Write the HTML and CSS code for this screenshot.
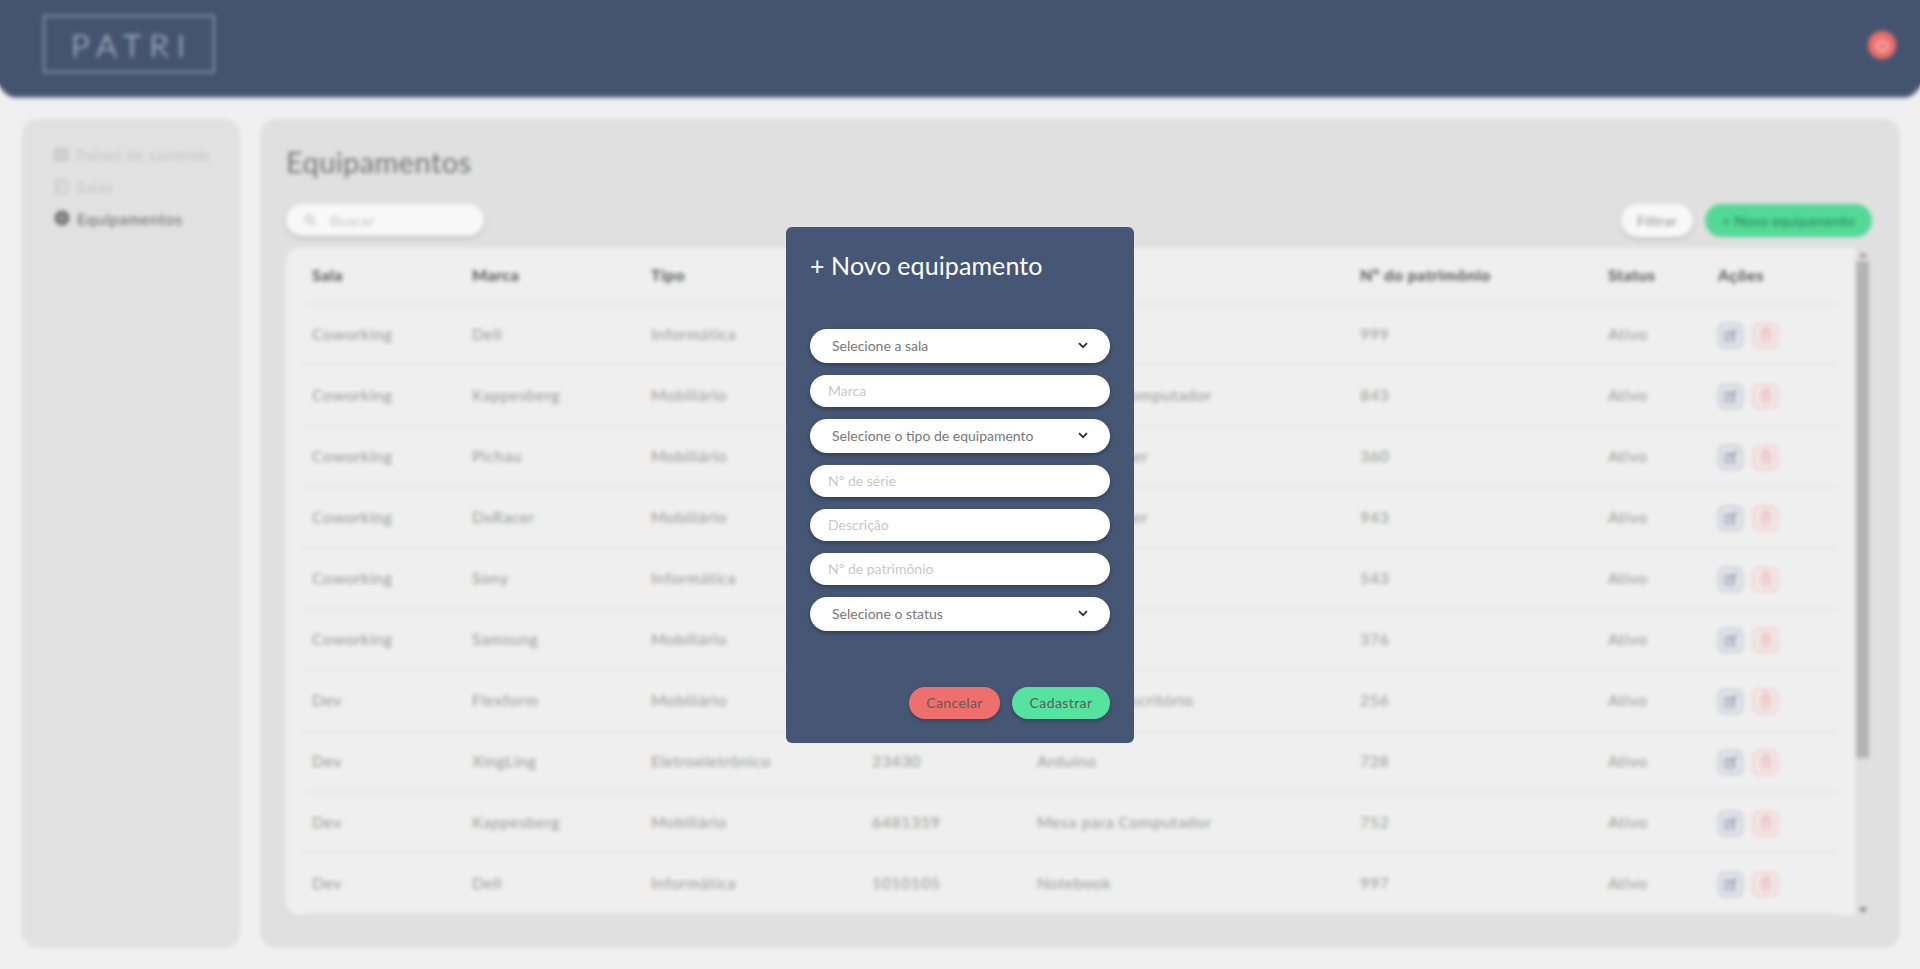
FILE: index.html
```html
<!DOCTYPE html>
<html lang="pt-BR">
<head>
  <meta charset="UTF-8">
  <meta name="viewport" content="width=device-width, initial-scale=1.0">
  <title>Patri</title>

  <link rel="stylesheet" href="styles.css">
</head>
<body>
  <header class="topbar">
    <div class="logo">PATRI</div>
    <button class="power">
      <svg width="16" height="16" viewBox="0 0 24 24" fill="none" stroke="#f8d3d2" stroke-width="2.6" stroke-linecap="round"><path d="M12 3v8"/><path d="M6.5 7a8 8 0 1 0 11 0"/></svg>
    </button>
  </header>

  <div class="page">
    <nav class="sidebar">
      <a class="nav-item">
        <svg width="15" height="15" viewBox="0 0 15 15" fill="#c4c4c4"><rect x="0" y="1" width="6.5" height="3.5"/><rect x="8" y="1" width="6.5" height="3.5"/><rect x="0" y="5.8" width="6.5" height="3.5"/><rect x="8" y="5.8" width="6.5" height="3.5"/><rect x="0" y="10.6" width="6.5" height="3.5"/><rect x="8" y="10.6" width="6.5" height="3.5"/></svg>
        Painel de controle
      </a>
      <a class="nav-item">
        <svg width="15" height="15" viewBox="0 0 15 15" fill="none" stroke="#c4c4c4" stroke-width="1.6"><rect x="2" y="1" width="11" height="13" rx="2"/><path d="M6 4v7"/></svg>
        Salas
      </a>
      <a class="nav-item active">
        <svg width="16" height="16" viewBox="0 0 16 16"><circle cx="8" cy="8" r="7.5" fill="#666"/><path d="M1 8h14M8 1v14M3 3l10 10M13 3L3 13" stroke="#ccc" stroke-width=".8"/></svg>
        Equipamentos
      </a>
    </nav>

    <main class="content">
      <h1>Equipamentos</h1>
      <div class="toolbar">
        <label class="search">
          <svg width="12" height="12" viewBox="0 0 12 12" fill="none" stroke="#bbb" stroke-width="1.6"><circle cx="5" cy="5" r="3.5"/><path d="M8 8l3 3"/></svg>
          <span>Buscar</span>
        </label>
        <button class="btn-filter">Filtrar</button>
        <button class="btn-new">+ Novo equipamento</button>
      </div>

      <div class="table-wrap">
        <div class="table-card">
          <table>
            <colgroup>
              <col class="c-sala"><col class="c-marca"><col class="c-tipo"><col class="c-serie"><col class="c-desc"><col class="c-pat"><col class="c-status"><col class="c-acoes">
            </colgroup>
            <thead>
              <tr><th>Sala</th><th>Marca</th><th>Tipo</th><th>Nº de série</th><th>Descrição</th><th>Nº do patrimônio</th><th>Status</th><th>Ações</th></tr>
            </thead>
            <tbody>
              <tr><td>Coworking</td><td>Dell</td><td>Informática</td><td></td><td></td><td>999</td><td>Ativo</td><td class="acoes"><span class="act edit"><svg viewBox="0 0 14 14"><path d="M1 3h8l-2 2H3v6h6V8l2-2v7H1z"/><path d="M5 7l6-6 2 2-6 6H5z"/></svg></span><span class="act del"><svg viewBox="0 0 14 14"><path d="M5 1.3h4M2.5 3.2h9"/><rect x="3" y="3.2" width="8" height="9.5" rx="1.5"/><circle cx="7" cy="8" r="1.4"/></svg></span></td></tr>
              <tr><td>Coworking</td><td>Kappesberg</td><td>Mobiliário</td><td></td><td>Mesa para Computador</td><td>843</td><td>Ativo</td><td class="acoes"><span class="act edit"><svg viewBox="0 0 14 14"><path d="M1 3h8l-2 2H3v6h6V8l2-2v7H1z"/><path d="M5 7l6-6 2 2-6 6H5z"/></svg></span><span class="act del"><svg viewBox="0 0 14 14"><path d="M5 1.3h4M2.5 3.2h9"/><rect x="3" y="3.2" width="8" height="9.5" rx="1.5"/><circle cx="7" cy="8" r="1.4"/></svg></span></td></tr>
              <tr><td>Coworking</td><td>Pichau</td><td>Mobiliário</td><td></td><td>Cadeira Gamer</td><td>360</td><td>Ativo</td><td class="acoes"><span class="act edit"><svg viewBox="0 0 14 14"><path d="M1 3h8l-2 2H3v6h6V8l2-2v7H1z"/><path d="M5 7l6-6 2 2-6 6H5z"/></svg></span><span class="act del"><svg viewBox="0 0 14 14"><path d="M5 1.3h4M2.5 3.2h9"/><rect x="3" y="3.2" width="8" height="9.5" rx="1.5"/><circle cx="7" cy="8" r="1.4"/></svg></span></td></tr>
              <tr><td>Coworking</td><td>DxRacer</td><td>Mobiliário</td><td></td><td>Cadeira Gamer</td><td>943</td><td>Ativo</td><td class="acoes"><span class="act edit"><svg viewBox="0 0 14 14"><path d="M1 3h8l-2 2H3v6h6V8l2-2v7H1z"/><path d="M5 7l6-6 2 2-6 6H5z"/></svg></span><span class="act del"><svg viewBox="0 0 14 14"><path d="M5 1.3h4M2.5 3.2h9"/><rect x="3" y="3.2" width="8" height="9.5" rx="1.5"/><circle cx="7" cy="8" r="1.4"/></svg></span></td></tr>
              <tr><td>Coworking</td><td>Sony</td><td>Informática</td><td></td><td></td><td>543</td><td>Ativo</td><td class="acoes"><span class="act edit"><svg viewBox="0 0 14 14"><path d="M1 3h8l-2 2H3v6h6V8l2-2v7H1z"/><path d="M5 7l6-6 2 2-6 6H5z"/></svg></span><span class="act del"><svg viewBox="0 0 14 14"><path d="M5 1.3h4M2.5 3.2h9"/><rect x="3" y="3.2" width="8" height="9.5" rx="1.5"/><circle cx="7" cy="8" r="1.4"/></svg></span></td></tr>
              <tr><td>Coworking</td><td>Samsung</td><td>Mobiliário</td><td></td><td></td><td>376</td><td>Ativo</td><td class="acoes"><span class="act edit"><svg viewBox="0 0 14 14"><path d="M1 3h8l-2 2H3v6h6V8l2-2v7H1z"/><path d="M5 7l6-6 2 2-6 6H5z"/></svg></span><span class="act del"><svg viewBox="0 0 14 14"><path d="M5 1.3h4M2.5 3.2h9"/><rect x="3" y="3.2" width="8" height="9.5" rx="1.5"/><circle cx="7" cy="8" r="1.4"/></svg></span></td></tr>
              <tr><td>Dev</td><td>Flexform</td><td>Mobiliário</td><td></td><td>Cadeira de Escritório</td><td>256</td><td>Ativo</td><td class="acoes"><span class="act edit"><svg viewBox="0 0 14 14"><path d="M1 3h8l-2 2H3v6h6V8l2-2v7H1z"/><path d="M5 7l6-6 2 2-6 6H5z"/></svg></span><span class="act del"><svg viewBox="0 0 14 14"><path d="M5 1.3h4M2.5 3.2h9"/><rect x="3" y="3.2" width="8" height="9.5" rx="1.5"/><circle cx="7" cy="8" r="1.4"/></svg></span></td></tr>
              <tr><td>Dev</td><td>XingLing</td><td>Eletroeletrônico</td><td>23430</td><td>Arduino</td><td>728</td><td>Ativo</td><td class="acoes"><span class="act edit"><svg viewBox="0 0 14 14"><path d="M1 3h8l-2 2H3v6h6V8l2-2v7H1z"/><path d="M5 7l6-6 2 2-6 6H5z"/></svg></span><span class="act del"><svg viewBox="0 0 14 14"><path d="M5 1.3h4M2.5 3.2h9"/><rect x="3" y="3.2" width="8" height="9.5" rx="1.5"/><circle cx="7" cy="8" r="1.4"/></svg></span></td></tr>
              <tr><td>Dev</td><td>Kappesberg</td><td>Mobiliário</td><td>6481359</td><td>Mesa para Computador</td><td>752</td><td>Ativo</td><td class="acoes"><span class="act edit"><svg viewBox="0 0 14 14"><path d="M1 3h8l-2 2H3v6h6V8l2-2v7H1z"/><path d="M5 7l6-6 2 2-6 6H5z"/></svg></span><span class="act del"><svg viewBox="0 0 14 14"><path d="M5 1.3h4M2.5 3.2h9"/><rect x="3" y="3.2" width="8" height="9.5" rx="1.5"/><circle cx="7" cy="8" r="1.4"/></svg></span></td></tr>
              <tr><td>Dev</td><td>Dell</td><td>Informática</td><td>1010105</td><td>Notebook</td><td>997</td><td>Ativo</td><td class="acoes"><span class="act edit"><svg viewBox="0 0 14 14"><path d="M1 3h8l-2 2H3v6h6V8l2-2v7H1z"/><path d="M5 7l6-6 2 2-6 6H5z"/></svg></span><span class="act del"><svg viewBox="0 0 14 14"><path d="M5 1.3h4M2.5 3.2h9"/><rect x="3" y="3.2" width="8" height="9.5" rx="1.5"/><circle cx="7" cy="8" r="1.4"/></svg></span></td></tr>
            </tbody>
          </table>
        </div>
        <div class="scroll">
          <span class="arrow up"></span>
          <span class="thumb"></span>
          <span class="arrow down"></span>
        </div>
      </div>
    </main>
  </div>

  <div class="overlay">
    <form class="modal">
      <h2>+ Novo equipamento</h2>
      <div class="fields">
        <select class="field"><option>Selecione a sala</option></select>
        <input class="field" type="text" placeholder="Marca">
        <select class="field"><option>Selecione o tipo de equipamento</option></select>
        <input class="field" type="text" placeholder="Nº de série">
        <input class="field" type="text" placeholder="Descrição">
        <input class="field" type="text" placeholder="Nº de patrimônio">
        <select class="field"><option>Selecione o status</option></select>
      </div>
      <div class="modal-actions">
        <button type="button" class="btn-cancel">Cancelar</button>
        <button type="button" class="btn-save">Cadastrar</button>
      </div>
    </form>
  </div>
</body>
</html>
```

FILE: styles.css
```css
* {
  box-sizing: border-box;
}

body {
  margin: 0;
  height: 969px;
  overflow: hidden;
  background: #f0f0f0;
  color: #777;
  font-family: "Lato", "Noto Sans", sans-serif;
  font-size: 16px;
  letter-spacing: .5px;
}

button,
input,
select {
  font-family: inherit;
  letter-spacing: inherit;
}

/* topo */
.topbar {
  height: 97px;
  padding: 15px 24px 0 43px;
  display: flex;
  justify-content: space-between;
  align-items: flex-start;
  background: #44546f;
  border-radius: 0 0 16px 16px;
  box-shadow: 0 1px 2px rgba(0, 0, 0, .3);
}

.logo {
  width: 172px;
  height: 58px;
  padding-left: 6px;
  display: flex;
  align-items: center;
  justify-content: center;
  border: 2px solid #8492a9;
  color: #c5ccd8;
  font-size: 32px;
  font-weight: 300;
  letter-spacing: 8px;
}

.power {
  width: 28px;
  height: 28px;
  margin-top: 16px;
  padding: 0;
  display: flex;
  align-items: center;
  justify-content: center;
  border: 0;
  border-radius: 50%;
  background: #ec6f6b;
}

/* layout */
.page {
  height: 828px;
  margin-top: 22px;
  padding: 0 20px 0 22px;
  display: flex;
  gap: 20px;
}

.sidebar {
  width: 218px;
  padding: 25px 20px 0 32px;
  display: flex;
  flex-direction: column;
  gap: 12px;
  background: #e1e1e1;
  border-radius: 16px;
  box-shadow: 0 1px 2px rgba(0, 0, 0, .06);
}

.nav-item {
  height: 20px;
  display: flex;
  align-items: center;
  gap: 7px;
  color: #c6c6c6;
  white-space: nowrap;
}

.nav-item.active {
  color: #6a6a6a;
}

.content {
  flex: 1;
  padding: 25px 28px 32px 26px;
  display: flex;
  flex-direction: column;
  background: #e0e0e0;
  border-radius: 16px;
  box-shadow: 0 1px 2px rgba(0, 0, 0, .06);
}

h1 {
  margin: 0;
  height: 36px;
  color: #777;
  font-size: 29px;
  font-weight: 400;
  line-height: 36px;
  letter-spacing: .4px;
}

.toolbar {
  margin-top: 24px;
  height: 32px;
  display: flex;
  align-items: center;
  gap: 12px;
}

.search {
  width: 198px;
  height: 32px;
  margin-right: auto;
  padding-left: 18px;
  display: flex;
  align-items: center;
  gap: 14px;
  background: #f8f8f8;
  border-radius: 16px;
  box-shadow: 0 2px 4px rgba(0, 0, 0, .18);
  color: #c4c4c4;
  font-size: 14px;
}

.btn-filter,
.btn-new {
  height: 33px;
  padding: 0;
  border: 0;
  border-radius: 17px;
  font-size: 14px;
}

.btn-filter {
  width: 72px;
  background: #f8f8f8;
  box-shadow: 0 2px 4px rgba(0, 0, 0, .18);
  color: #8a8a8a;
}

.btn-new {
  width: 167px;
  background: #52d998;
  color: #2f7d58;
  letter-spacing: .2px;
}

/* tabela */
.table-wrap {
  flex: 1;
  min-height: 0;
  margin: 12px 2px 0 0;
  display: flex;
}

.table-card {
  flex: 1;
  overflow: hidden;
  padding: 0 18px;
  background: #efefef;
  border-radius: 14px 0 0 14px;
}

table {
  width: 100%;
  table-layout: fixed;
  border-collapse: collapse;
}

.c-sala { width: 160px; }
.c-marca { width: 179px; }
.c-tipo { width: 221px; }
.c-serie { width: 165px; }
.c-desc { width: 323px; }
.c-pat { width: 248px; }
.c-status { width: 110px; }

th,
td {
  padding: 0 0 2px 8px;
  text-align: left;
  font-weight: 400;
  white-space: nowrap;
}

th {
  height: 56px;
  color: #555;
  font-weight: 700;
}

td {
  height: 61px;
  color: #999;
}

tr {
  border-bottom: 2px solid #e3e3e3;
}

.acoes {
  padding: 1px 0 0 8px;
}

.act {
  width: 25px;
  height: 25px;
  margin-right: 10px;
  display: inline-flex;
  align-items: center;
  justify-content: center;
  vertical-align: middle;
  border: 2px solid;
  border-radius: 6px;
}

.act svg {
  width: 16px;
  height: 16px;
}

.edit {
  border-color: #bfc6d2;
  background: #e8e9ec;
}

.edit svg {
  fill: #9ea8ba;
}

.del {
  border-color: #f4c6c5;
}

.del svg {
  fill: none;
  stroke: #f0aeac;
  stroke-width: 1.4;
}

/* barra de rolagem */
.scroll {
  width: 15px;
  display: flex;
  flex-direction: column;
  align-items: center;
  padding: 5px 0 3px;
}

.arrow {
  width: 0;
  height: 0;
  border-left: 4px solid transparent;
  border-right: 4px solid transparent;
}

.up {
  border-bottom: 4px solid #777;
}

.down {
  border-top: 4px solid #555;
}

.thumb {
  width: 13px;
  height: 497px;
  margin: 4px 0 auto;
  background: #b4b4b4;
}

/* modal */
.overlay {
  position: fixed;
  inset: 0;
  display: flex;
  align-items: center;
  justify-content: center;
  backdrop-filter: blur(2px);
}

.modal {
  width: 348px;
  height: 516px;
  padding: 22px 24px 24px;
  display: flex;
  flex-direction: column;
  background: #465775;
  border-radius: 6px;
}

h2 {
  margin: 0;
  height: 32px;
  color: #fff;
  font-size: 25px;
  font-weight: 400;
  line-height: 32px;
  letter-spacing: .1px;
}

.fields {
  margin-top: 48px;
  display: flex;
  flex-direction: column;
  gap: 12px;
}

.field {
  width: 300px;
  height: 32px;
  padding: 0 18px;
  border: 0;
  border-radius: 17px;
  background: #fff;
  box-shadow: 0 2px 4px rgba(0, 0, 0, .3);
  font-size: 14px;
  letter-spacing: 0;
  outline: none;
}

select.field {
  height: 34px;
  padding: 0 22px;
  appearance: none;
  color: #777;
  background: #fff url("data:image/svg+xml,%3Csvg xmlns='http://www.w3.org/2000/svg' width='10' height='7' viewBox='0 0 10 7'%3E%3Cpath d='M1 1.2l4 4 4-4' fill='none' stroke='%23333' stroke-width='1.9'/%3E%3C/svg%3E") no-repeat right 22px center;
}

.field::placeholder {
  color: #c8c8c8;
}

.modal-actions {
  margin-top: auto;
  display: flex;
  justify-content: flex-end;
  gap: 12px;
}

.modal-actions button {
  height: 32px;
  padding: 0;
  border: 0;
  border-radius: 17px;
  box-shadow: 0 2px 4px rgba(0, 0, 0, .25);
  color: #5b5b5b;
  font-size: 14px;
  letter-spacing: .4px;
}

.btn-cancel {
  width: 91px;
  background: #ef6f6c;
}

.btn-save {
  width: 98px;
  background: #56e39f;
}
```
